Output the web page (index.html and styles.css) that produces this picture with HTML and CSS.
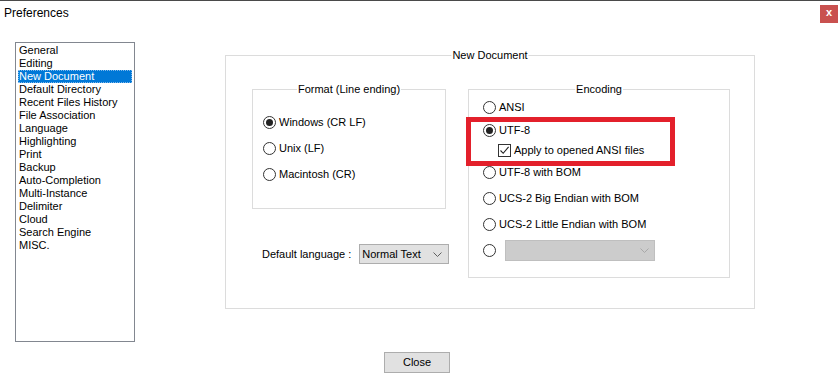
FILE: index.html
```html
<!DOCTYPE html>
<html>
<head>
<meta charset="utf-8">
<title>Preferences</title>
<link rel="stylesheet" href="styles.css">
</head>
<body>
<div class="window">
  <div class="titlebar">
    <span class="title">Preferences</span>
    <span class="close-x">x</span>
  </div>
  <div class="content">
    <ul class="list">
      <li class="item">General</li>
      <li class="item">Editing</li>
      <li class="item selected">New Document</li>
      <li class="item">Default Directory</li>
      <li class="item">Recent Files History</li>
      <li class="item">File Association</li>
      <li class="item">Language</li>
      <li class="item">Highlighting</li>
      <li class="item">Print</li>
      <li class="item">Backup</li>
      <li class="item">Auto-Completion</li>
      <li class="item">Multi-Instance</li>
      <li class="item">Delimiter</li>
      <li class="item">Cloud</li>
      <li class="item">Search Engine</li>
      <li class="item">MISC.</li>
    </ul>
    <div class="group outer">
      <span class="group-title">New Document</span>
      <div class="col">
        <div class="group format">
          <span class="group-title">Format (Line ending)</span>
          <div class="opt-row"><span class="radio checked"></span><span>Windows (CR LF)</span></div>
          <div class="opt-row"><span class="radio"></span><span>Unix (LF)</span></div>
          <div class="opt-row"><span class="radio"></span><span>Macintosh (CR)</span></div>
        </div>
        <div class="lang-row">
          <span>Default language :</span>
          <span class="combo"><span>Normal Text</span><svg class="chev" width="9" height="5" viewBox="0 0 9 5"><path d="M0.5 0.5 L4.5 4.5 L8.5 0.5" fill="none" stroke="#606060" stroke-width="1"/></svg></span>
        </div>
      </div>
      <div class="group encoding">
        <span class="group-title">Encoding</span>
        <div class="enc-row first"><span class="radio"></span><span>ANSI</span></div>
        <div class="enc-row s3"><span class="radio checked"></span><span>UTF-8</span></div>
        <div class="enc-row sub"><span class="check"><svg width="11" height="11" viewBox="0 0 11 11"><path d="M1.5 5.5 L4.2 8.3 L9.6 1.8" fill="none" stroke="#222" stroke-width="1.1"/></svg></span><span>Apply to opened ANSI files</span></div>
        <div class="enc-row s2"><span class="radio"></span><span>UTF-8 with BOM</span></div>
        <div class="enc-row s6"><span class="radio"></span><span>UCS-2 Big Endian with BOM</span></div>
        <div class="enc-row s6"><span class="radio"></span><span>UCS-2 Little Endian with BOM</span></div>
        <div class="enc-row s5"><span class="radio"></span><span class="combo disabled"><svg class="chev" width="9" height="5" viewBox="0 0 9 5"><path d="M0.5 0.5 L4.5 4.5 L8.5 0.5" fill="none" stroke="#a8a8a8" stroke-width="1"/></svg></span></div>
        <div class="highlight"></div>
      </div>
    </div>
  </div>
  <div class="footer">
    <span class="button">Close</span>
  </div>
</div>
</body>
</html>
```

FILE: styles.css
```css
* { box-sizing: border-box; }
html, body { margin: 0; padding: 0; background: #ffffff; }
body {
  font-family: "Liberation Sans", Arial, sans-serif;
  font-size: 11px;
  line-height: 13px;
  color: #000;
}
.window {
  width: 840px;
  height: 384px;
  border-top: 1px solid #4a4a4a;
  display: flex;
  flex-direction: column;
  overflow: hidden;
}
.titlebar {
  height: 23px;
  display: flex;
  align-items: center;
  justify-content: space-between;
  padding-left: 4px;
  padding-right: 2px;
}
.title { font-size: 12px; line-height: 14px; }
.close-x {
  width: 18px;
  height: 18px;
  margin-top: 2px;
  background: #c9514f;
  color: #fff;
  font-weight: bold;
  font-size: 11px;
  display: flex;
  align-items: center;
  justify-content: center;
  padding-bottom: 2px;
}
.content {
  display: flex;
  align-items: flex-start;
}
.list {
  list-style: none;
  margin: 18px 0 0 15px;
  padding: 1px;
  width: 120px;
  height: 300px;
  border: 1px solid #828790;
}
.item {
  height: 13px;
  padding-left: 2px;
  white-space: nowrap;
}
.item.selected {
  margin: 0 1px;
  padding-left: 1px;
  background: #0078d7;
  color: #fff;
  outline: 1px dotted #7fb8ec;
  outline-offset: -1px;
}
.group {
  border: 1px solid #dcdcdc;
  position: relative;
}
.group-title {
  position: absolute;
  top: -7px;
  left: 50%;
  transform: translateX(-50%);
  background: #fff;
  padding: 0 1px;
  white-space: nowrap;
}
.outer {
  margin: 31px 0 0 90px;
  width: 530px;
  height: 254px;
  padding: 33px 0 0 26px;
  display: flex;
  align-items: flex-start;
  gap: 22px;
}
.col {
  width: 194px;
  flex: none;
  display: flex;
  flex-direction: column;
}
.format {
  width: 194px;
  height: 120px;
  padding: 19px 0 0 10px;
}
.opt-row {
  height: 26px;
  display: flex;
  align-items: center;
  gap: 3px;
}
.radio {
  width: 13px;
  height: 13px;
  border: 1px solid #333;
  border-radius: 50%;
  background: #fff;
  flex: none;
  display: flex;
  align-items: center;
  justify-content: center;
}
.radio.checked::after {
  content: "";
  width: 7px;
  height: 7px;
  border-radius: 50%;
  background: #222;
}
.check {
  width: 13px;
  height: 13px;
  border: 1px solid #333;
  background: #fff;
  flex: none;
  display: flex;
  align-items: center;
  justify-content: center;
}
.lang-row {
  margin-top: 35px;
  padding-left: 10px;
  height: 20px;
  display: flex;
  align-items: center;
  gap: 8px;
  white-space: nowrap;
}
.combo {
  width: 90px;
  height: 20px;
  flex: none;
  background: #e1e1e1;
  border: 1px solid #adadad;
  display: flex;
  align-items: center;
  justify-content: space-between;
  padding: 0 6px 0 2px;
}
.combo.disabled {
  width: 150px;
  height: 21px;
  margin-left: 6px;
  background: #cccccc;
  border-color: #bfbfbf;
  justify-content: flex-end;
  padding-right: 5px;
}
.encoding {
  width: 262px;
  height: 189px;
  flex: none;
  padding: 7px 0 0 14px;
}
.enc-row {
  height: 20px;
  display: flex;
  align-items: center;
  gap: 3px;
  white-space: nowrap;
}
.enc-row.s2 { margin-top: 2px; }
.enc-row.s3 { margin-top: 3px; }
.enc-row.s5 { margin-top: 5px; height: 22px; }
.enc-row.s6 { margin-top: 6px; }
.enc-row.sub { padding-left: 15px; }
.highlight {
  position: absolute;
  left: -3px;
  top: 27px;
  width: 209px;
  height: 49px;
  border: 5px solid #e3202b;
}
.footer {
  padding-left: 384px;
  margin-top: 10px;
}
.button {
  display: flex;
  align-items: center;
  justify-content: center;
  width: 66px;
  height: 21px;
  background: #e1e1e1;
  border: 1px solid #adadad;
}
```
